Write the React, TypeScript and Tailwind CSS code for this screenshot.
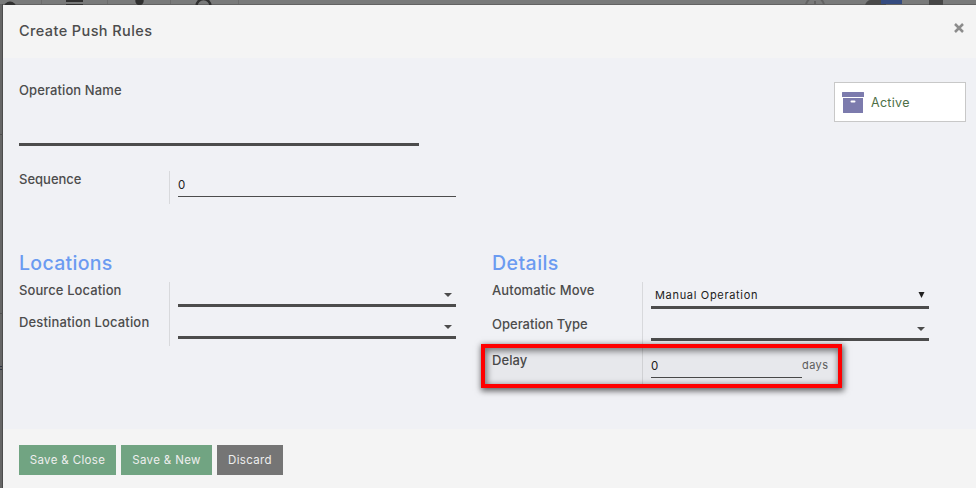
import React from "react";

function Label({ children, className = "" }: { children: React.ReactNode; className?: string }) {
  return (
    <div className={`whitespace-nowrap text-[13px] leading-5 font-[550] text-[#4c4c4c] ${className}`}>{children}</div>
  );
}

function Caret() {
  return (
    <svg width="8" height="4" viewBox="0 0 8 4" className="mr-1 mb-[7px] shrink-0">
      <path d="M0 0h8L4 4z" fill="#4c4c4c" />
    </svg>
  );
}

function SelectField({ className = "" }: { className?: string }) {
  return (
    <div className={`flex w-[278px] items-end justify-end border-b-[3px] border-[#4c4c4c] ${className}`}>
      <Caret />
    </div>
  );
}

function Heading({ children, className }: { children: React.ReactNode; className: string }) {
  return <h2 className={`h-[30px] text-[19.5px] leading-[22px] font-[550] text-[#6b9bf1] ${className}`}>{children}</h2>;
}

function Backdrop() {
  return (
    <svg width="976" height="488" className="absolute inset-0">
      <rect width="976" height="488" fill="#666666" />
      <rect width="976" height="5" fill="#797a7a" />
      <rect x="41" width="1" height="5" fill="#6c6c6c" />
      <rect x="107" width="1" height="5" fill="#6c6c6c" />
      <rect x="170" width="1" height="5" fill="#6c6c6c" />
      <rect x="238" width="1" height="5" fill="#6c6c6c" />
      <rect y="4" width="976" height="1" fill="#626262" />
      <circle cx="10" cy="8" r="6.5" fill="#303030" />
      <rect x="66" width="17" height="2" fill="#303030" />
      <rect x="66" y="4" width="17" height="1" fill="#303030" />
      <circle cx="139.500" cy="1" r="4.200" fill="#303030" />
      <circle cx="203.500" cy="6" r="7" fill="none" stroke="#303030" strokeWidth="2.500" />
      <circle cx="815" cy="6" r="9" fill="none" stroke="#626262" strokeWidth="2" />
      <path d="M815 1v4" stroke="#626262" strokeWidth="2" />
      <path d="M865 5c1-3 3-5 6-5h15v5z" fill="#494949" />
      <rect x="881" width="21" height="4" fill="#344b80" />
      <rect x="929" width="14" height="5" fill="#464646" />
      <rect x="2" y="4" width="1" height="484" fill="#4c4c4c" />
      <rect y="134" width="3" height="1" fill="#505050" />
      <rect y="313" width="3" height="1" fill="#505050" />
      <path d="M0 366.500h2M0 369.500h2" stroke="#303544" />
    </svg>
  );
}

export default function App() {
  return (
    <div className="relative h-[488px] w-[976px] overflow-hidden pt-[5px] pl-[3px] font-['Inter',sans-serif]">
      <Backdrop />
      <div className="relative flex h-[483px] flex-col bg-[#f0f1f5] text-[#4c4c4c]">
        <header className="flex h-[53px] shrink-0 items-start justify-between bg-[#f4f4f4] pr-3 pl-4">
          <h1 className="mt-4 text-[14.5px] leading-5 font-[550] tracking-[0.4px] text-[#4c4c4c]">Create Push Rules</h1>
          <svg width="10" height="10" viewBox="0 0 10 10" className="mt-[18px]">
            <path d="M1 1l8 8M9 1l-8 8" stroke="#8c8c8c" strokeWidth="2.500" />
          </svg>
        </header>

        <main className="relative h-[371px] shrink-0 pr-[10px] pl-4">
          <div className="flex h-[88px] items-start justify-between">
            <div className="flex h-[88px] w-[400px] flex-col border-b-[3px] border-[#4c4c4c] pt-[22px]">
              <Label className="tracking-[0.1px]">Operation Name</Label>
            </div>
            <div className="mt-6 flex h-10 w-[132px] items-center border border-[#c8c8c8] bg-white pt-px pl-[7px]">
              <svg width="22" height="22" viewBox="0 0 22 22">
                <path d="M.5 0h21a.5.5 0 0 1 .5.500V5H0V.5A.5.500 0 0 1 .5 0zM1 6h20v14.500a.5.500 0 0 1-.5.500h-19a.5.500 0 0 1-.5-.5z" fill="#7c7bad" />
                <rect x="8.500" y="8.500" width="5" height="2" rx="1" fill="white" />
              </svg>
              <span className="ml-[7px] pt-px text-[12.5px] tracking-[0.3px] text-[#4d6f46]">Active</span>
            </div>
          </div>

          <div className="mt-[25px] flex h-[33px]">
            <Label className="w-[150px] -mt-[2px]">Sequence</Label>
            <div className="border-l border-[#d8d9dc] pl-2">
              <div className="h-[26px] w-[278px] border-b border-[#4c4c4c] pt-[6px] text-[11.5px] leading-4 text-[#202020]">0</div>
            </div>
          </div>

          <div className="mt-[48px] flex">
            <section className="w-[473px]">
              <Heading className="tracking-[0.3px]">Locations</Heading>
              <div className="flex">
                <div className="flex w-[150px] flex-col gap-3 -mt-[2px]">
                  <Label className="tracking-[0.1px]">Source Location</Label>
                  <Label className="tracking-[0.15px]">Destination Location</Label>
                </div>
                <div className="h-16 border-l border-[#d8d9dc] pl-2">
                  <SelectField className="h-[25px]" />
                  <SelectField className="mt-[7px] h-[25px]" />
                </div>
              </div>
            </section>

            <section>
              <Heading className="tracking-[0.45px]">Details</Heading>
              <div className="flex">
                <div className="flex w-[150px] flex-col -mt-[2px]">
                  <Label className="h-[34px] tracking-[0.1px]">Automatic Move</Label>
                  <Label className="h-[36px]">Operation Type</Label>
                  <Label className="tracking-[0.1px]">Delay</Label>
                </div>
                <div className="h-[102px] border-l border-[#d8d9dc] pl-2">
                  <div className="flex h-[27px] w-[278px] items-start justify-between border-b-[3px] border-[#4c4c4c] pt-[5px] pr-1 pl-1 text-[11px] leading-4 text-[#202020]">
                    <span className="tracking-[0.68px]">Manual Operation</span>
                    <svg width="7" height="7" viewBox="0 0 7 7" className="mt-[5px]">
                      <path d="M.5 0h6l-3 6z" fill="#202020" />
                    </svg>
                  </div>
                  <SelectField className="mt-[5px] h-[27px]" />
                  <div className="mt-[11px] flex h-[26px] items-start">
                    <div className="h-[26px] w-[151px] border-b border-[#4c4c4c] pt-[6px] text-[11.5px] leading-4 text-[#202020]">0</div>
                    <span className="pt-[5px] text-[11px] leading-4 tracking-[0.4px] text-[#606060]">days</span>
                  </div>
                </div>
              </div>
            </section>
          </div>
          <div className="absolute top-[286px] left-[478px] h-[44px] w-[361px] border-4 border-[#ff0000] bg-black/[0.035] shadow-[1px_2px_6px_1px_rgba(0,0,0,0.6),inset_1px_2px_6px_1px_rgba(0,0,0,0.5)]" />
        </main>

        <footer className="flex h-[59px] shrink-0 gap-[5px] bg-[#f4f4f4] pt-4 pl-4 text-[11.5px] text-[#eeeeee]">
          <button className="h-[30px] w-[97px] whitespace-nowrap bg-[#71a482] pt-[2px] tracking-[0.35px]">Save &amp; Close</button>
          <button className="h-[30px] w-[91px] whitespace-nowrap bg-[#71a482] pt-[2px] tracking-[0.35px]">Save &amp; New</button>
          <button className="h-[30px] w-[66px] whitespace-nowrap bg-[#757575] pt-[2px] tracking-[0.35px]">Discard</button>
        </footer>
      </div>
    </div>
  );
}
